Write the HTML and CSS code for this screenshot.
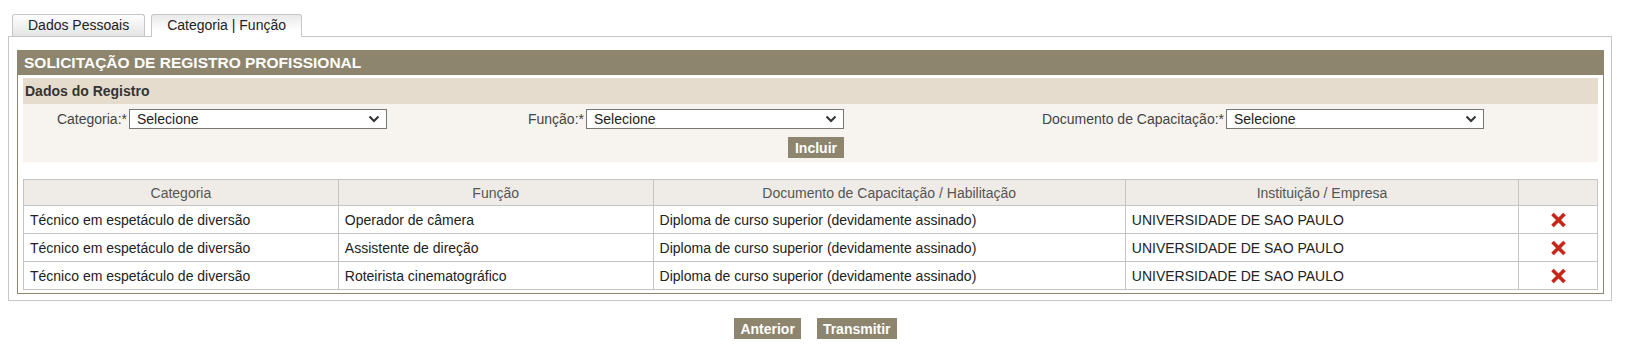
FILE: index.html
```html
<!DOCTYPE html>
<html lang="pt-BR">
<head>
  <meta charset="UTF-8">
  <title>Solicitação de Registro Profissional</title>
  <link rel="stylesheet" href="styles.css">
</head>
<body>
  <div class="tabs">
    <a href="#" class="tab">Dados Pessoais</a>
    <a href="#" class="tab active">Categoria | Função</a>
  </div>

  <div class="frame">
    <div class="panel">
      <div class="panel-title">SOLICITAÇÃO DE REGISTRO PROFISSIONAL</div>
      <div class="panel-body">
        <div class="section-title">Dados do Registro</div>
        <div class="form-area">
          <label class="field-label" for="categoria">Categoria:*</label>
          <div class="select-box">
            <select id="categoria"><option>Selecione</option></select>
            <svg class="chevron" width="12" height="8" viewBox="0 0 12 8"><path d="M1.5 1.5 L6 6 L10.5 1.5" fill="none" stroke="#333" stroke-width="2"/></svg>
          </div>
          <label class="field-label" for="funcao">Função:*</label>
          <div class="select-box">
            <select id="funcao"><option>Selecione</option></select>
            <svg class="chevron" width="12" height="8" viewBox="0 0 12 8"><path d="M1.5 1.5 L6 6 L10.5 1.5" fill="none" stroke="#333" stroke-width="2"/></svg>
          </div>
          <label class="field-label" for="documento">Documento de Capacitação:*</label>
          <div class="select-box">
            <select id="documento"><option>Selecione</option></select>
            <svg class="chevron" width="12" height="8" viewBox="0 0 12 8"><path d="M1.5 1.5 L6 6 L10.5 1.5" fill="none" stroke="#333" stroke-width="2"/></svg>
          </div>
          <button class="btn btn-incluir">Incluir</button>
        </div>

        <table class="grid">
          <colgroup>
            <col style="width: 20%">
            <col style="width: 20%">
            <col style="width: 30%">
            <col style="width: 25%">
            <col style="width: 5%">
          </colgroup>
          <thead>
            <tr>
              <th>Categoria</th>
              <th>Função</th>
              <th>Documento de Capacitação / Habilitação</th>
              <th>Instituição / Empresa</th>
              <th></th>
            </tr>
          </thead>
          <tbody>
            <tr>
              <td>Técnico em espetáculo de diversão</td>
              <td>Operador de câmera</td>
              <td>Diploma de curso superior (devidamente assinado)</td>
              <td>UNIVERSIDADE DE SAO PAULO</td>
              <td class="acao"><svg class="remove" width="17" height="16" viewBox="0 0 17 16"><path d="M2.5 2 L14.5 14 M14.5 2 L2.5 14" stroke="#c4281a" stroke-width="3.6"/></svg></td>
            </tr>
            <tr>
              <td>Técnico em espetáculo de diversão</td>
              <td>Assistente de direção</td>
              <td>Diploma de curso superior (devidamente assinado)</td>
              <td>UNIVERSIDADE DE SAO PAULO</td>
              <td class="acao"><svg class="remove" width="17" height="16" viewBox="0 0 17 16"><path d="M2.5 2 L14.5 14 M14.5 2 L2.5 14" stroke="#c4281a" stroke-width="3.6"/></svg></td>
            </tr>
            <tr>
              <td>Técnico em espetáculo de diversão</td>
              <td>Roteirista cinematográfico</td>
              <td>Diploma de curso superior (devidamente assinado)</td>
              <td>UNIVERSIDADE DE SAO PAULO</td>
              <td class="acao"><svg class="remove" width="17" height="16" viewBox="0 0 17 16"><path d="M2.5 2 L14.5 14 M14.5 2 L2.5 14" stroke="#c4281a" stroke-width="3.6"/></svg></td>
            </tr>
          </tbody>
        </table>
      </div>
    </div>
  </div>

  <div class="actions">
    <button class="btn">Anterior</button>
    <button class="btn">Transmitir</button>
  </div>
</body>
</html>
```

FILE: styles.css
```css
* {
  box-sizing: border-box;
}
body {
  margin: 8px;
  font-family: "Liberation Sans", Arial, sans-serif;
  font-size: 14px;
  color: #222;
  background: #fff;
}
.tabs {
  display: flex;
  align-items: flex-end;
  gap: 6px;
  margin-top: 6px;
  padding-left: 4px;
  height: 22px;
}
.tab {
  display: block;
  height: 22px;
  padding: 2px 15px 0;
  border: 1px solid #c6c6c6;
  border-bottom: 0;
  border-radius: 3px 3px 0 0;
  background: linear-gradient(#ffffff, #e4e4e4);
  color: #222;
  text-decoration: none;
  line-height: 16px;
}
.tab.active {
  position: relative;
  z-index: 1;
  height: 23px;
  margin-bottom: -1px;
  background: linear-gradient(#e9e9e9, #ffffff 70%);
}
.frame {
  width: 1604px;
  border: 1px solid #c6c6c6;
  padding: 13px 7px 6px 8px;
}
.panel {
  border: 1px solid #8d856e;
}
.panel-title {
  height: 24px;
  line-height: 24px;
  padding-left: 6px;
  background: #8d856e;
  color: #fff;
  font-weight: bold;
  font-size: 15.5px;
}
.panel-body {
  padding: 3px 5px;
}
.section-title {
  height: 26px;
  line-height: 26px;
  padding-left: 2px;
  background: #e6dccd;
  font-weight: bold;
  color: #333;
}
.form-area {
  display: grid;
  grid-template-columns: 106px 258px 199px 258px 382px 258px;
  grid-template-rows: 20px 21px;
  row-gap: 8px;
  padding: 5px 0 4px;
  background: #f7f4ef;
}
.field-label {
  justify-self: end;
  align-self: center;
  padding-right: 2px;
  color: #444;
  white-space: nowrap;
}
.select-box {
  position: relative;
  width: 258px;
  height: 20px;
}
.select-box select {
  appearance: none;
  -webkit-appearance: none;
  width: 100%;
  height: 20px;
  margin: 0;
  padding: 0 24px 0 7px;
  border: 1px solid #767676;
  border-radius: 0;
  background: #fff;
  font-family: inherit;
  font-size: 14px;
  color: #222;
}
.chevron {
  position: absolute;
  right: 7px;
  top: 6px;
  pointer-events: none;
}
.btn {
  height: 21px;
  padding: 0 6px;
  border: 0;
  background: #8d856e;
  color: #fff;
  font-family: inherit;
  font-weight: bold;
  font-size: 14px;
  cursor: pointer;
}
.btn-incluir {
  grid-row: 2;
  grid-column: 4;
  justify-self: end;
  padding: 0 7px;
}
.grid {
  width: 100%;
  margin-top: 17px;
  border-collapse: collapse;
  table-layout: fixed;
  border: 1px solid #c4c4c4;
}
.grid th,
.grid td {
  border: 1px solid #c4c4c4;
  padding: 0 6px;
  white-space: nowrap;
  overflow: hidden;
}
.grid th {
  height: 26px;
  background: #efece8;
  color: #555;
  font-weight: normal;
  text-align: center;
}
.grid td {
  height: 28px;
  text-align: left;
  color: #222;
}
.grid td.acao {
  text-align: center;
  padding: 0;
}
.remove {
  display: inline-block;
  vertical-align: middle;
}
.actions {
  display: flex;
  justify-content: center;
  gap: 16px;
  margin-top: 17px;
  padding-left: 1px;
}
```
